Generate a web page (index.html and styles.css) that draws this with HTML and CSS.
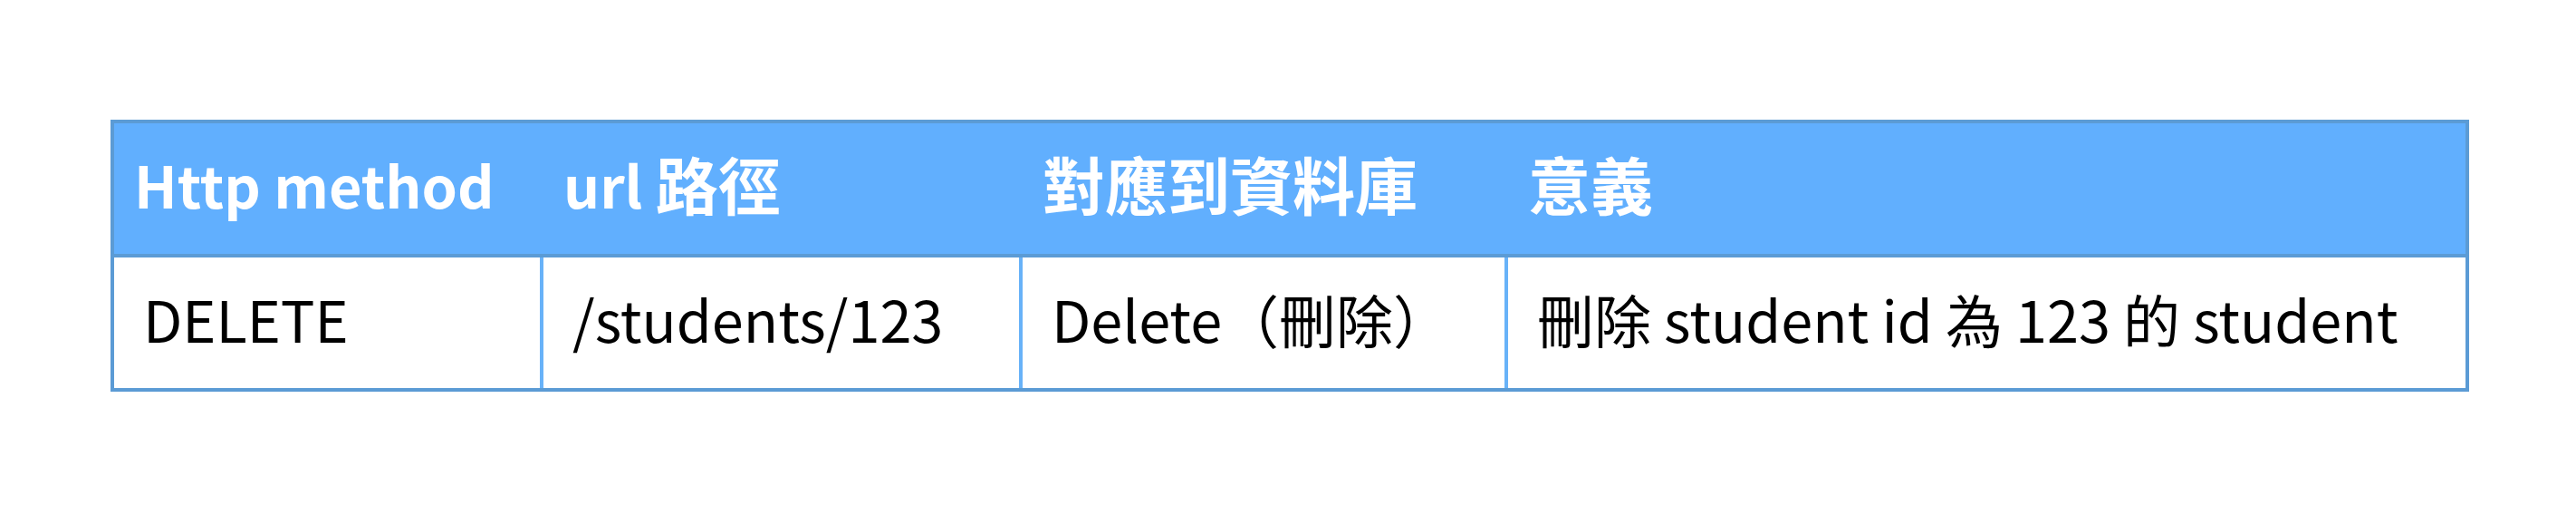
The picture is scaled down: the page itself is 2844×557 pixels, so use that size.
FILE: index.html
```html
<!DOCTYPE html>
<html lang="zh-Hant">
<head>
<meta charset="utf-8">
<title>DELETE</title>
<link rel="stylesheet" href="styles.css">
</head>
<body>
<main class="page">
  <div class="api-table">
    <div class="cell head">Http method</div>
    <div class="cell head">url <span class="cjk">路徑</span></div>
    <div class="cell head"><span class="cjk">對應到資料庫</span></div>
    <div class="cell head"><span class="cjk">意義</span></div>
    <div class="cell data">DELETE</div>
    <div class="cell data">/students/123</div>
    <div class="cell data">Delete（刪除）</div>
    <div class="cell data last">刪除 student id 為 123 的 student</div>
  </div>
</main>
</body>
</html>
```
FILE: styles.css
```css
html, body {
  margin: 0;
  padding: 0;
  background: #ffffff;
}

.page {
  padding: 132px 0 0 122px;
  font-family: "Noto Sans CJK TC", "Noto Sans", sans-serif;
}

.api-table {
  display: grid;
  grid-template-columns: 474px 529px 536px 1057px;
  width: max-content;
  border: 4px solid #5b9bd5;
}

.cell {
  display: flex;
  align-items: center;
  height: 132px;
  padding-bottom: 12px;
  box-sizing: content-box;
  white-space: pre;
  font-size: 63px;
}

.head {
  background: #61affe;
  color: #ffffff;
  font-weight: 700;
  padding-left: 22px;
  border-bottom: 4px solid #5b9bd5;
}

.head .cjk {
  font-size: 69px;
}

.data {
  color: #000000;
  padding-left: 32px;
  border-right: 4px solid #68b2f8;
}

.data.last {
  border-right: none;
}
```
